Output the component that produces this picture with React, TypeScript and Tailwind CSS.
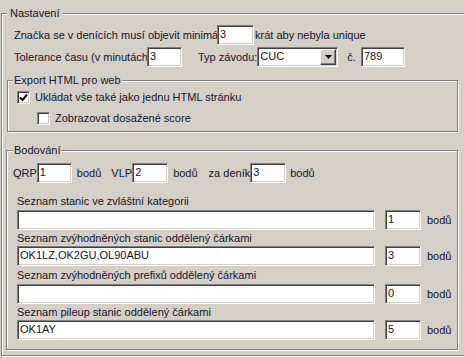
import React from 'react';

// sunken text field look (classic 3D edit box)
const sunken =
  'bg-white border border-t-[#808080] border-l-[#808080] border-b-white border-r-white shadow-[inset_1px_1px_0_#404040,inset_-1px_-1px_0_#d4d0c8]';

// etched group box
const groupBox = 'border border-[#808080] shadow-[inset_1px_1px_0_#ffffff,1px_1px_0_#ffffff]';

function Field({ value, className }: { value: string; className: string }) {
  return (
    <div className={`${sunken} ${className} h-[20px] flex items-center pl-[2px] pb-[1px] whitespace-nowrap overflow-hidden`}>
      {value}
    </div>
  );
}

function Check({ checked }: { checked?: boolean }) {
  return (
    <div className={`${sunken} w-[13px] h-[13px] shrink-0 flex items-center justify-center`}>
      {checked && (
        <svg width="9" height="9" viewBox="0 0 9 9">
          <path d="M1 4.5 L3.5 7 L8 1.5" stroke="#000" strokeWidth="2" fill="none" />
        </svg>
      )}
    </div>
  );
}

function Select({ value }: { value: string }) {
  return (
    <div className={`${sunken} w-[81px] h-[20px] flex items-center justify-between pl-[2px] pr-[1px]`}>
      <span className="pb-[1px]">{value}</span>
      <div className="w-[16px] h-[16px] bg-[#d4d0c8] border border-t-white border-l-white border-b-[#404040] border-r-[#404040] shadow-[inset_-1px_-1px_0_#808080] flex items-center justify-center">
        <svg width="7" height="4" viewBox="0 0 7 4">
          <path d="M0 0 H7 L3.5 4 Z" fill="#000" />
        </svg>
      </div>
    </div>
  );
}

function ListRow({ label, value, points, labelH }: { label: string; value: string; points: string; labelH: string }) {
  return (
    <>
      <div className={`${labelH} flex items-center pl-[10px] whitespace-nowrap`}>{label}</div>
      <div className="h-[20px] flex items-center pl-[10px]">
        <Field value={value} className="w-[358px]" />
        <Field value={points} className="w-[36px] ml-[10px]" />
        <span className="ml-[6px]">bodů</span>
      </div>
    </>
  );
}

export default function App() {
  return (
    <div className="w-[464px] h-[358px] overflow-hidden bg-[#d4d0c8] text-[11px] leading-[13px] text-[#14142a] font-['Liberation_Sans',Arial,sans-serif]">
      <fieldset className={`${groupBox} mt-[7px] ml-[1px] w-[480px] h-[349px]`}>
        <legend className="ml-[5px] px-[3px] bg-[#d4d0c8] leading-[13px]">Nastavení</legend>

        <div className="mt-[5px] h-[20px] flex items-center pl-[12px] whitespace-nowrap">
          <span className="w-[203px] overflow-hidden">Značka se v denících musí objevit minimá</span>
          <Field value="3" className="w-[37px]" />
          <span className="ml-[1px]">krát aby nebyla unique</span>
        </div>

        <div className="mt-[2px] h-[20px] flex items-center pl-[12px] whitespace-nowrap">
          <span className="w-[133px] overflow-hidden">Tolerance času (v minutách)</span>
          <Field value="3" className="w-[35px]" />
          <span className="ml-[16px]">Typ závodu:</span>
          <Select value="CUC" />
          <span className="ml-[9px]">č.</span>
          <Field value="789" className="w-[44px] ml-[5px]" />
        </div>

        <fieldset className={`${groupBox} mt-[6px] ml-[5px] w-[451px] pb-[2px]`}>
          <legend className="ml-[5px] px-[1px] bg-[#d4d0c8] leading-[14px]">Export HTML pro web</legend>
          <div className="h-[21px] flex items-center pl-[9px]">
            <Check checked />
            <span className="ml-[5px]">Ukládat vše také jako jednu HTML stránku</span>
          </div>
          <div className="h-[21px] flex items-center pl-[29px]">
            <Check />
            <span className="ml-[5px]">Zobrazovat dosažené score</span>
          </div>
        </fieldset>

        <fieldset className={`${groupBox} mt-[11px] ml-[4px] w-[452px] pb-[9px]`}>
          <legend className="ml-[6px] px-[1px] bg-[#d4d0c8] leading-[14px]">Bodování</legend>
          <div className="mt-[6px] h-[20px] flex items-center pl-[6px] whitespace-nowrap">
            <span>QRP</span>
            <Field value="1" className="w-[35px]" />
            <span className="ml-[5px]">bodů</span>
            <span className="ml-[10px]">VLP</span>
            <Field value="2" className="w-[36px]" />
            <span className="ml-[5px]">bodů</span>
            <span className="ml-[11px]">za deník</span>
            <Field value="3" className="w-[36px]" />
            <span className="ml-[4px]">bodů</span>
          </div>
          <div className="mt-[9px]" />
          <ListRow label="Seznam stanic ve zvláštní kategorii" value="" points="1" labelH="h-[18px]" />
          <ListRow label="Seznam zvýhodněných stanic oddělený čárkami" value="OK1LZ,OK2GU,OL90ABU" points="3" labelH="h-[16px]" />
          <ListRow label="Seznam zvýhodněných prefixů oddělený čárkami" value="" points="0" labelH="h-[18px]" />
          <ListRow label="Seznam pileup stanic oddělený čárkami" value="OK1AY" points="5" labelH="h-[16px]" />
        </fieldset>
      </fieldset>
    </div>
  );
}
